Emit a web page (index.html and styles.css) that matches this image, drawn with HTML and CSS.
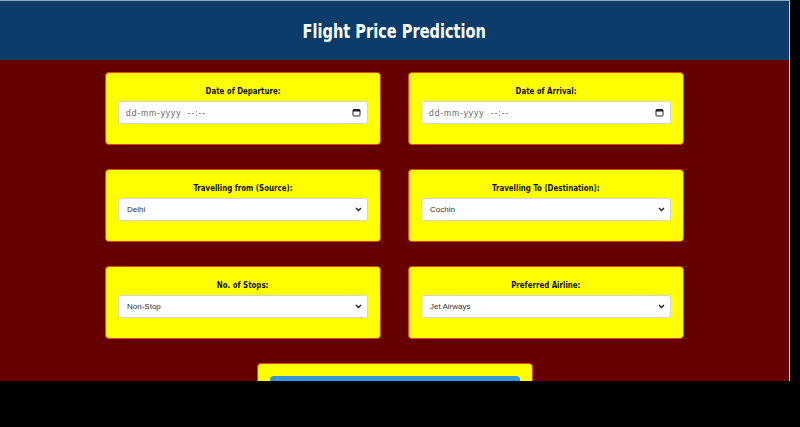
FILE: index.html
```html
<!DOCTYPE html>
<html lang="en">
<head>
<meta charset="utf-8">
<title>Flight Price Prediction</title>
<link rel="stylesheet" href="styles.css">
</head>
<body>
<div class="frame">
  <header class="topbar">
    <h1 class="title">Flight Price Prediction</h1>
  </header>
  <main class="content">
    <form class="grid">
      <div class="card">
        <label class="label"><span class="squeeze">Date of Departure:</span></label>
        <div class="field">
          <span class="ph">dd-mm-yyyy&nbsp;&nbsp;--:--</span>
          <svg class="cal" width="9" height="9" viewBox="0 0 9 9"><rect x="1" y="1.5" width="7" height="6.5" rx="0.8" fill="none" stroke="#222" stroke-width="1"/><rect x="1" y="1.5" width="7" height="2" fill="#222"/></svg>
        </div>
      </div>
      <div class="card">
        <label class="label"><span class="squeeze">Date of Arrival:</span></label>
        <div class="field">
          <span class="ph">dd-mm-yyyy&nbsp;&nbsp;--:--</span>
          <svg class="cal" width="9" height="9" viewBox="0 0 9 9"><rect x="1" y="1.5" width="7" height="6.5" rx="0.8" fill="none" stroke="#222" stroke-width="1"/><rect x="1" y="1.5" width="7" height="2" fill="#222"/></svg>
        </div>
      </div>
      <div class="card">
        <label class="label"><span class="squeeze">Travelling from (Source):</span></label>
        <div class="field sel">
          <span class="val">Delhi</span>
          <svg class="chev" width="7" height="5" viewBox="0 0 7 5"><path d="M1 1 L3.5 3.5 L6 1" fill="none" stroke="#222" stroke-width="1.4"/></svg>
        </div>
      </div>
      <div class="card">
        <label class="label"><span class="squeeze">Travelling To (Destination):</span></label>
        <div class="field sel">
          <span class="val">Cochin</span>
          <svg class="chev" width="7" height="5" viewBox="0 0 7 5"><path d="M1 1 L3.5 3.5 L6 1" fill="none" stroke="#222" stroke-width="1.4"/></svg>
        </div>
      </div>
      <div class="card">
        <label class="label"><span class="squeeze">No. of Stops:</span></label>
        <div class="field sel">
          <span class="val">Non-Stop</span>
          <svg class="chev" width="7" height="5" viewBox="0 0 7 5"><path d="M1 1 L3.5 3.5 L6 1" fill="none" stroke="#222" stroke-width="1.4"/></svg>
        </div>
      </div>
      <div class="card">
        <label class="label"><span class="squeeze">Preferred Airline:</span></label>
        <div class="field sel">
          <span class="val">Jet Airways</span>
          <svg class="chev" width="7" height="5" viewBox="0 0 7 5"><path d="M1 1 L3.5 3.5 L6 1" fill="none" stroke="#222" stroke-width="1.4"/></svg>
        </div>
      </div>
      <div class="card submit-card">
        <button type="button" class="btn" aria-label="Predict Price"></button>
      </div>
    </form>
  </main>
</div>
</body>
</html>
```
FILE: styles.css
```css
* { box-sizing: border-box; }
html, body { margin: 0; padding: 0; background: #000; }
.frame {
  width: 790px;
  height: 381px;
  overflow: hidden;
  background: #640000;
  border-top: 1px solid #9aa8b8;
  border-right: 1px solid #cfcfcf;
  display: flex;
  flex-direction: column;
}
.topbar {
  height: 59px;
  flex: none;
  background: #0b3c6a;
  display: flex;
  align-items: center;
  justify-content: center;
}
.title {
  margin: 0;
  color: #fff;
  font-family: "DejaVu Sans Condensed", "Liberation Sans", sans-serif;
  font-stretch: condensed;
  font-weight: bold;
  font-size: 20px;
  transform: scaleX(0.81);
}
.content {
  padding-top: 12px;
  display: flex;
  justify-content: center;
}
.grid {
  display: grid;
  grid-template-columns: 276px 276px;
  column-gap: 27px;
  row-gap: 24px;
}
.card {
  height: 73px;
  background: #ffff00;
  border: 1px solid #e0442a;
  border-radius: 4px;
  padding: 12px 12px 0;
  display: flex;
  flex-direction: column;
  align-items: stretch;
}
.label {
  display: block;
  text-align: center;
  font-family: "DejaVu Sans Condensed", "Liberation Sans", sans-serif;
  font-stretch: condensed;
  font-weight: bold;
  font-size: 9px;
  line-height: 12px;
  color: #111;
  margin-bottom: 4px;
}
.squeeze {
  display: inline-block;
  transform: scaleX(0.87);
}
.field {
  height: 23px;
  background: #fff;
  border: 1px solid #d4d4d4;
  border-radius: 3px;
  display: flex;
  align-items: center;
  justify-content: space-between;
  padding: 0 6px 0 7px;
  font-family: "Liberation Sans", Arial, sans-serif;
  font-size: 8.5px;
  color: #555;
}
.ph { color: #666; letter-spacing: 0.9px; }
.sel { padding-left: 8px; padding-right: 5px; }
.val { color: #333; font-size: 8px; }
.cal { display: block; }
.chev { display: block; }
.submit-card {
  grid-column: 1 / span 2;
  justify-self: center;
  width: 276px;
}
.btn {
  display: block;
  width: 100%;
  height: 32px;
  background: #3498db;
  border: none;
  border-radius: 4px;
}
```
